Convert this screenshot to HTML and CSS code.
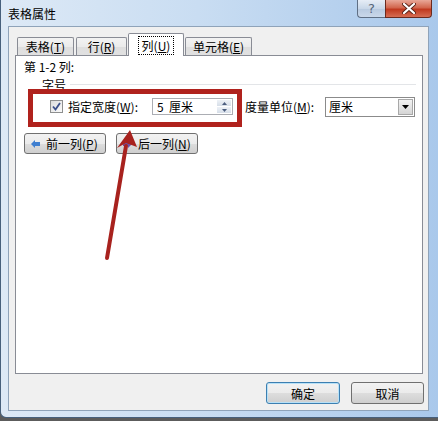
FILE: index.html
```html
<!DOCTYPE html>
<html lang="zh-CN">
  <head>
    <meta charset="UTF-8" />
    <title>表格属性</title>
    <link rel="stylesheet" href="styles.css">
  </head>
  <body>
    <div class="window">
      <div class="titlebar">
        <span class="title">表格属性</span>
        <div class="caption-buttons">
          <div class="cap-btn help">?</div>
          <div class="cap-btn close">
            <svg width="14" height="11" viewBox="0 0 14 11">
              <path d="M2 1 L12 10 M12 1 L2 10" stroke="#5a2418" stroke-width="4" stroke-linecap="round" />
              <path d="M2 1 L12 10 M12 1 L2 10" stroke="#fff" stroke-width="2.2" stroke-linecap="round" />
            </svg>
          </div>
        </div>
      </div>

      <div class="client">
        <div class="tabs">
          <div class="tab tab-table">表格(<u>T</u>)</div>
          <div class="tab tab-row">行(<u>R</u>)</div>
          <div class="tab tab-col active"><span class="focus">列(<u>U</u>)</span></div>
          <div class="tab tab-cell">单元格(<u>E</u>)</div>
        </div>

        <div class="panel">
          <div class="cols-label">第 1-2 列:</div>
          <div class="group-head">
            <span>字号</span>
            <div class="group-line"></div>
          </div>

          <div class="size-row">
            <span class="checkbox">
              <svg width="9" height="9" viewBox="0 0 9 9">
                <path d="M1 4.5 L3.5 7.5 L8 1" fill="none" stroke="#3b4f8a" stroke-width="1.8" />
              </svg>
            </span>
            <span class="width-label">指定宽度(<u>W</u>):</span>
            <div class="spin">
              <span class="spin-value">5&nbsp; 厘米</span>
              <div class="spin-btns">
                <span class="spin-btn"><svg width="5" height="3" viewBox="0 0 5 3"><path d="M0 3 L2.5 0 L5 3z" fill="#4d5f80" /></svg></span>
                <span class="spin-btn"><svg width="5" height="3" viewBox="0 0 5 3"><path d="M0 0 L2.5 3 L5 0z" fill="#4d5f80" /></svg></span>
              </div>
            </div>
            <span class="unit-label">度量单位(<u>M</u>):</span>
            <div class="select">
              <span class="select-value">厘米</span>
              <span class="drop-btn"><svg width="7" height="4" viewBox="0 0 7 4"><path d="M0 0 L7 0 L3.5 4z" fill="#000" /></svg></span>
            </div>
          </div>

          <div class="nav-row">
            <button class="btn nav-btn">
              <svg width="9" height="8" viewBox="0 0 9 8"><path d="M0 4 L4 0 L4 2 L9 2 L9 6 L4 6 L4 8z" fill="#3f7fd0" /></svg>
              <span class="btn-text">前一列(<u>P</u>)</span>
            </button>
            <button class="btn nav-btn">
              <svg width="9" height="8" viewBox="0 0 9 8"><path d="M9 4 L5 0 L5 2 L0 2 L0 6 L5 6 L5 8z" fill="#6b55a8" /></svg>
              <span class="btn-text">后一列(<u>N</u>)</span>
            </button>
          </div>
        </div>

        <div class="footer">
          <button class="btn dlg-btn default">确定</button>
          <button class="btn dlg-btn">取消</button>
        </div>
      </div>

      <!-- annotation drawn over the dialog -->
      <div class="callout-box"></div>
      <svg class="callout-arrow" width="438" height="421" viewBox="0 0 438 421">
        <path d="M107 258 L126 146" stroke="#a8221e" stroke-width="4" stroke-linecap="round" />
        <path d="M130 130 L117 148 L126 143 L137 147z" fill="#a8221e" />
      </svg>
    </div>
  </body>
</html>
```

FILE: styles.css
```css
body {
  margin: 0;
  background-color: #5c5c5c;
  font-family: "Noto Sans CJK SC", "Liberation Sans", sans-serif;
  font-size: 12px;
  line-height: 15px;
  color: #000;
}

u {
  text-decoration: underline;
}

.window {
  position: relative;
  width: 438px;
  height: 418px;
  box-sizing: border-box;
  display: flex;
  flex-direction: column;
  border-left: 1px solid #47607c;
  border-bottom: 1px solid #47607c;
  border-bottom-left-radius: 6px;
  background: linear-gradient(to right, #dde9f6 0%, #c9ddf2 45%, #a9c8eb 100%);
}

.titlebar {
  height: 26px;
  flex: 0 0 26px;
  display: flex;
  align-items: flex-start;
  padding-left: 7px;
}

.title {
  margin-top: 6px;
}

.caption-buttons {
  margin-left: auto;
  margin-right: 6px;
  display: flex;
}

.cap-btn {
  height: 18px;
  box-sizing: border-box;
  border: 1px solid #5f6f84;
  border-top: none;
  display: flex;
  align-items: center;
  justify-content: center;
}

.help {
  width: 28px;
  border-right: none;
  border-bottom-left-radius: 4px;
  background: linear-gradient(#e6edf6, #c9d7e8 50%, #b7c9df 51%, #cad8ea);
  color: #56657a;
  font-family: "DejaVu Sans", sans-serif;
  font-size: 13px;
}

.close {
  width: 47px;
  border-bottom-right-radius: 4px;
  border-color: #6b2a1e;
  background: linear-gradient(#e9a898, #d2664d 45%, #c0391f 55%, #d66d53);
}

.client {
  flex: 1;
  margin: 0 9px 6px 7px;
  box-sizing: border-box;
  border: 1px solid #8fa3b9;
  background-color: #f0f0f0;
  padding: 6px 5px 0 6px;
  display: flex;
  flex-direction: column;
}

.tabs {
  height: 22px;
  display: flex;
  align-items: flex-end;
  padding-left: 2px;
}

.tab {
  height: 18px;
  box-sizing: border-box;
  border: 1px solid #898c95;
  border-bottom: none;
  border-radius: 2px 2px 0 0;
  background: linear-gradient(#f3f3f3, #ebebeb 50%, #dedede 51%, #e1e1e1);
  display: flex;
  align-items: center;
  justify-content: center;
  line-height: 15px;
}

.tab-table { width: 57px; margin-right: 2px; }
.tab-row { width: 51px; margin-right: 1px; }
.tab-col { width: 56px; margin-right: 1px; }
.tab-cell { width: 67px; }

.tab.active {
  height: 23px;
  margin-bottom: -1px;
  position: relative;
  z-index: 1;
  background: #fff;
}

.focus {
  outline: 1px dotted #000;
  outline-offset: 1px;
  padding: 0 2px;
}

.panel {
  height: 319px;
  box-sizing: border-box;
  border: 1px solid #898c95;
  background-color: #fff;
}

.cols-label {
  margin: 4px 0 0 8px;
  line-height: 13px;
}

.group-head {
  margin: 5px 0 0 26px;
  height: 13px;
  line-height: 13px;
  display: flex;
  align-items: flex-start;
}

.group-line {
  flex: 1;
  height: 1px;
  margin: 6px 6px 0 4px;
  background-color: #e3e5e8;
}

.size-row {
  margin-top: 5px;
  height: 21px;
  display: flex;
  align-items: center;
  padding-left: 34px;
}

.checkbox {
  width: 13px;
  height: 13px;
  box-sizing: border-box;
  border: 1px solid #8e8f8f;
  background: linear-gradient(135deg, #dcdcdc, #fbfbfb);
  display: flex;
  align-items: center;
  justify-content: center;
}

.width-label {
  width: 84px;
  margin-left: 5px;
}

.spin {
  width: 81px;
  height: 17px;
  box-sizing: border-box;
  border: 1px solid #abadb3;
  display: flex;
  align-items: center;
  justify-content: space-between;
  padding: 0 1px 0 4px;
}

.spin-btns {
  display: flex;
  flex-direction: column;
  gap: 1px;
}

.spin-btn {
  width: 14px;
  height: 6px;
  background: linear-gradient(#eef2f7, #d6dee8);
  display: flex;
  align-items: center;
  justify-content: center;
}

.unit-label {
  width: 80px;
  margin-left: 12px;
}

.select {
  width: 90px;
  height: 20px;
  box-sizing: border-box;
  border: 1px solid #8b8b8b;
  display: flex;
  align-items: center;
  justify-content: space-between;
  padding: 0 1px 0 3px;
}

.drop-btn {
  width: 15px;
  height: 16px;
  box-sizing: border-box;
  border: 1px solid #a8a8a8;
  background: linear-gradient(#f2f2f2, #d5d5d5);
  display: flex;
  align-items: center;
  justify-content: center;
}

.nav-row {
  margin: 16px 0 0 8px;
  display: flex;
  gap: 10px;
}

.btn {
  font: inherit;
  line-height: 15px;
  color: #000;
  box-sizing: border-box;
  border: 1px solid #707070;
  border-radius: 3px;
  background: linear-gradient(#f2f2f2, #ebebeb 50%, #dddddd 51%, #cfcfcf);
  padding: 0;
  display: flex;
  align-items: center;
  justify-content: center;
}

.btn-text {
  white-space: nowrap;
}

.nav-btn {
  width: 82px;
  height: 21px;
  gap: 6px;
  justify-content: flex-start;
  padding-left: 6px;
}

.footer {
  margin: 8px -1px 0 0;
  display: flex;
  justify-content: flex-end;
  gap: 11px;
}

.dlg-btn {
  height: 22px;
  width: 73px;
}

.dlg-btn.default {
  width: 74px;
  border-color: #3c7fb1;
  box-shadow: inset 0 0 0 1px #b8e1f7;
}

.callout-box {
  position: absolute;
  left: 27px;
  top: 89px;
  width: 214px;
  height: 38px;
  box-sizing: border-box;
  border: 5px solid #b0221d;
}

.callout-arrow {
  position: absolute;
  left: -1px;
  top: 0;
  pointer-events: none;
}
```
